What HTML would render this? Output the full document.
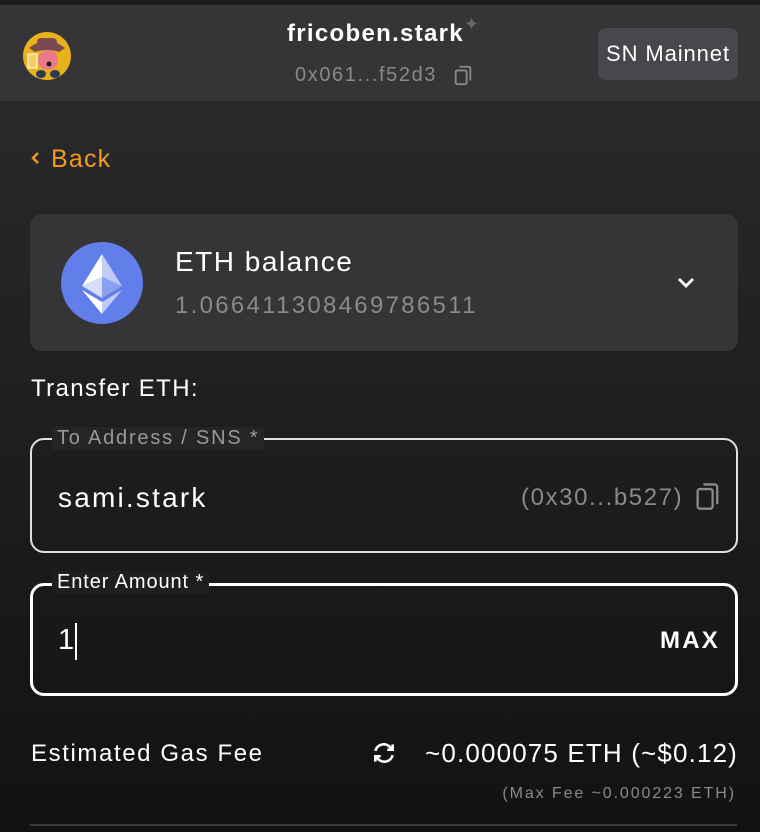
<!DOCTYPE html>
<html><head><meta charset="utf-8"><style>
*{margin:0;padding:0;box-sizing:border-box}
body{width:760px;height:832px;overflow:hidden;font-family:"Liberation Sans",sans-serif;color:#fff;background:linear-gradient(#29292b 100px,#1f1f20 400px,#121212 832px);position:relative}
.a{position:absolute;white-space:nowrap}
</style></head><body>
<div class="a" style="left:0;top:0;width:760px;height:5px;background:#1c1c1e"></div>
<div class="a" style="left:0;top:5px;width:760px;height:96px;background:#353538"></div>
<svg class="a" style="left:21px;top:30px" width="52" height="52" viewBox="0 0 52 52">
<circle cx="26" cy="26" r="24" fill="#e8b21c"/>
<path d="M8 18 Q26 4 44 18 L38 22 Q26 18 14 22Z" fill="#7a4a4e"/>
<rect x="16" y="8" width="20" height="12" rx="4" fill="#7a4a4e"/>
<circle cx="27" cy="30" r="10" fill="#e87a8a"/>
<rect x="7" y="24" width="9" height="14" fill="#f5d060" stroke="#fff" stroke-width="1"/>
<ellipse cx="20" cy="44" rx="5" ry="4" fill="#2c3c52"/><ellipse cx="34" cy="44" rx="5" ry="4" fill="#2c3c52"/>
<circle cx="28" cy="34" r="2.5" fill="#222"/>
</svg>
<div class="a" style="left:287px;top:20px;font-size:24px;font-weight:bold;letter-spacing:1.3px">fricoben.stark</div>
<div class="a" style="left:464px;top:14px;color:#666;font-size:18px">✦</div>
<div class="a" style="left:295px;top:64px;font-size:20px;color:#8a8a8a;letter-spacing:1.6px">0x061...f52d3</div>
<svg class="a" style="left:452px;top:64px" width="22" height="22" viewBox="0 0 24 24" fill="none" stroke="#8a8a8a" stroke-width="2"><rect x="4" y="7" width="12" height="15" rx="2"/><path d="M8 3h10a2 2 0 0 1 2 2v13"/></svg>
<div class="a" style="left:598px;top:28px;width:140px;height:52px;background:#48484c;border-radius:8px;font-size:22px;line-height:52px;text-align:center;letter-spacing:0.9px">SN Mainnet</div>
<svg class="a" style="left:31px;top:151px" width="10" height="14" viewBox="0 0 10 14" fill="none" stroke="#f29a1c" stroke-width="2.4"><path d="M7 2L2 7l5 5"/></svg>
<div class="a" style="left:51px;top:145px;font-size:25px;color:#f29a1c;letter-spacing:1.2px">Back</div>
<div class="a" style="left:30px;top:214px;width:708px;height:137px;background:#353538;border-radius:12px"></div>
<svg class="a" style="left:61px;top:242px" width="82" height="82" viewBox="0 0 82 82">
<circle cx="41" cy="41" r="41" fill="#627eea"/>
<path d="M41 12 L41 35 L61 44Z" fill="#c0cbf6"/><path d="M41 12 L21 44 L41 35Z" fill="#fff"/>
<path d="M41 35 L21 44 L41 56Z" fill="#fff" opacity=".75"/><path d="M41 35 L61 44 L41 56Z" fill="#8aa0f0"/>
<path d="M41 60 L41 72 L61 48Z" fill="#c0cbf6"/><path d="M41 60 L41 72 L21 48Z" fill="#fff"/>
</svg>
<div class="a" style="left:175px;top:246px;font-size:28px;letter-spacing:1.5px">ETH balance</div>
<div class="a" style="left:175px;top:292px;font-size:24px;color:#8a8a8a;letter-spacing:2.3px">1.066411308469786511</div>
<svg class="a" style="left:676px;top:276px" width="20" height="14" viewBox="0 0 20 14" fill="none" stroke="#fff" stroke-width="2.8"><path d="M3 3l7 7 7-7"/></svg>
<div class="a" style="left:31px;top:375px;font-size:24px;letter-spacing:1.4px">Transfer ETH:</div>
<div class="a" style="left:30px;top:438px;width:708px;height:115px;border:2px solid #e0e0e0;border-radius:14px"></div>
<div class="a" style="left:52px;top:427px;padding:0 5px;font-size:20px;color:#999;background:#252526;letter-spacing:1.8px">To Address / SNS *</div>
<div class="a" style="left:58px;top:482px;font-size:28px;letter-spacing:2.2px">sami.stark</div>
<div class="a" style="left:521px;top:484px;font-size:24px;color:#8a8a8a;letter-spacing:1.6px">(0x30...b527)</div>
<svg class="a" style="left:694px;top:481px" width="28" height="30" viewBox="0 0 24 26" fill="none" stroke="#8a8a8a" stroke-width="2"><rect x="3" y="7" width="13" height="17" rx="2"/><path d="M8 3h10a2 2 0 0 1 2 2v15"/></svg>
<div class="a" style="left:30px;top:583px;width:708px;height:113px;border:3px solid #fff;border-radius:14px"></div>
<div class="a" style="left:52px;top:571px;padding:0 5px;font-size:20px;color:#fff;background:#1e1e1f;letter-spacing:0.9px">Enter Amount *</div>
<div class="a" style="left:58px;top:624px;font-size:29px">1</div>
<div class="a" style="left:75px;top:623px;width:2px;height:37px;background:#fff"></div>
<div class="a" style="left:660px;top:627px;font-size:24px;font-weight:bold;letter-spacing:2.2px">MAX</div>
<div class="a" style="left:31px;top:740px;font-size:24px;letter-spacing:1.6px">Estimated Gas Fee</div>
<svg class="a" style="left:371px;top:740px" width="26" height="26" viewBox="0 0 24 24" fill="none" stroke="#fff" stroke-width="2.4"><path d="M4 10a8 8 0 0 1 14-3l2 2M20 14a8 8 0 0 1-14 3l-2-2"/><path d="M20 4v5h-5M4 20v-5h5"/></svg>
<div class="a" style="right:22px;top:738px;font-size:26px;letter-spacing:1.15px">~0.000075 ETH (~$0.12)</div>
<div class="a" style="right:24px;top:785px;font-size:16px;color:#8a8a8a;letter-spacing:1.9px">(Max Fee ~0.000223 ETH)</div>
<div class="a" style="left:30px;top:824px;width:707px;height:2px;background:#3a3a3a"></div>
</body></html>
